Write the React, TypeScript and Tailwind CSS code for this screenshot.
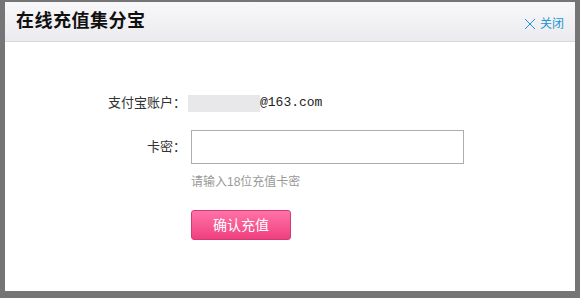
import { useState } from 'react';

const cjk = "font-['Liberation_Sans','Noto_Sans_CJK_SC',sans-serif]";

export default function App() {
  const [code, setCode] = useState('');

  return (
    <div className={`w-[580px] h-[298px] bg-[#757575] pt-[2px] pl-[5px] pr-[5px] ${cjk}`}>
      <div className="flex flex-col h-[289px] bg-white">
        <div className="flex items-center justify-between h-[40px] px-[11px] bg-gradient-to-b from-[#f8f8fa] to-[#ebeaee] border-b border-[#d8d8dc]">
          <h1 className="text-[18px] font-bold text-[#111] tracking-[0.5px]">在线充值集分宝</h1>
          <button className="flex items-center gap-[4px] mt-[4px] text-[12px] text-[#1a96d4]">
            <svg width="12" height="12" viewBox="0 0 12 12" className="stroke-[#1a96d4]">
              <path d="M1 1 L11 11 M11 1 L1 11" strokeWidth="1" fill="none" />
            </svg>
            <span>关闭</span>
          </button>
        </div>

        <div className="flex flex-col pt-[51px] pl-[97px]">
          <div className="flex items-center h-[20px]">
            <span className="w-[84px] text-right text-[13px] text-[#333]">支付宝账户：</span>
            <span className="ml-[2px] w-[72px] h-[17px] bg-[#e8e7ea]"></span>
            <span className="font-['Liberation_Mono',monospace] text-[13px] text-[#222]">@163.com</span>
          </div>

          <div className="flex items-center mt-[17px]">
            <span className="w-[84px] text-right text-[13px] text-[#333]">卡密：</span>
            <input
              value={code}
              onChange={(e) => setCode(e.target.value)}
              className="ml-[5px] w-[273px] h-[34px] border border-[#adadad] px-2 text-[13px] outline-none"
            />
          </div>
          <p className="ml-[89px] mt-[9px] text-[12px] text-[#999]">请输入18位充值卡密</p>

          <button className="ml-[89px] mt-[19px] w-[100px] h-[30px] rounded-[3px] border border-[#d23a74] bg-gradient-to-b from-[#ff72a8] to-[#ef3e7e] text-[14px] text-white">
            确认充值
          </button>
        </div>
      </div>
    </div>
  );
}
